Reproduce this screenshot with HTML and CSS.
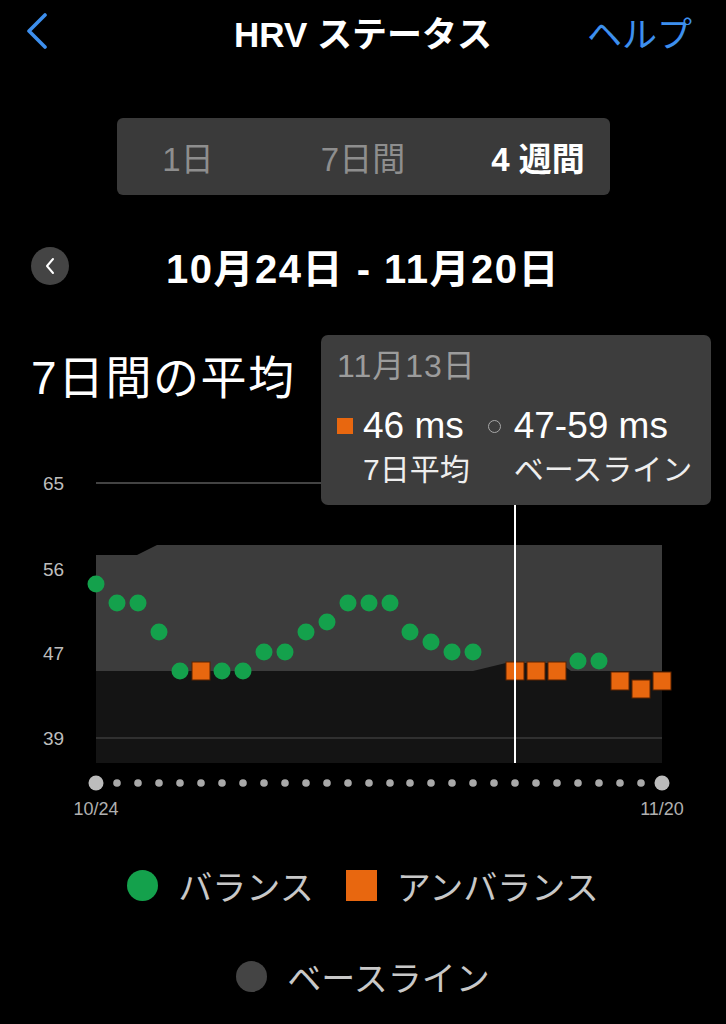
FILE: index.html
```html
<!DOCTYPE html>
<html lang="ja">

<head>
    <meta charset="UTF-8">
    <meta name="viewport" content="width=device-width, initial-scale=1.0">
    <title>HRVステータス</title>
    <link rel="stylesheet" href="styles.css">
</head>

<body>
    <div class="header">
        <div class="back">
            <svg width="22" height="36" viewBox="0 0 22 36">
                <path d="M19 2 L3 18 L19 34" fill="none" stroke="#3d8fee" stroke-width="3.6" stroke-linecap="round" stroke-linejoin="round" />
            </svg>
        </div>
        <div class="title">HRV ステータス</div>
        <div class="help">ヘルプ</div>
    </div>

    <div class="segment">
        <div class="seg-item">1日</div>
        <div class="seg-item">7日間</div>
        <div class="seg-item on">4 週間</div>
    </div>

    <div class="range">
        <div class="prev">
            <svg width="12" height="18" viewBox="0 0 12 18">
                <path d="M9 2 L3 9 L9 16" fill="none" stroke="#fff" stroke-width="2" stroke-linecap="round" stroke-linejoin="round" />
            </svg>
        </div>
        <div class="range-text">10月24日 - 11月20日</div>
    </div>

    <div class="chart">
        <h2 class="chart-title">7日間の平均</h2>

        <svg class="plot" width="726" height="416" viewBox="0 404 726 416">
            <!-- 目盛り -->
            <g class="ylabels">
                <text x="43" y="490">65</text>
                <text x="43" y="576">56</text>
                <text x="43" y="660">47</text>
                <text x="43" y="745">39</text>
            </g>
            <line x1="96" y1="483" x2="700" y2="483" stroke="#5a5a5a" stroke-width="1.5" />

            <!-- ベースライン帯 -->
            <polygon points="96,555 137,555 157,545 662,545 662,763 96,763" fill="#3c3c3c" />
            <polygon points="96,671 473,671 506,663 560,663 571,671 662,671 662,763 96,763" fill="#141414" />
            <line x1="96" y1="738" x2="662" y2="738" stroke="#3a3a3a" stroke-width="1.5" />

            <!-- データ -->
            <g class="ok">
                <circle cx="96" cy="584" r="8.5" />
                <circle cx="117" cy="603" r="8.5" />
                <circle cx="138" cy="603" r="8.5" />
                <circle cx="159" cy="632" r="8.5" />
                <circle cx="180" cy="671" r="8.5" />
                <circle cx="222" cy="671" r="8.5" />
                <circle cx="243" cy="671" r="8.5" />
                <circle cx="264" cy="652" r="8.5" />
                <circle cx="285" cy="652" r="8.5" />
                <circle cx="306" cy="632" r="8.5" />
                <circle cx="327" cy="622" r="8.5" />
                <circle cx="348" cy="603" r="8.5" />
                <circle cx="369" cy="603" r="8.5" />
                <circle cx="390" cy="603" r="8.5" />
                <circle cx="410" cy="632" r="8.5" />
                <circle cx="431" cy="642" r="8.5" />
                <circle cx="452" cy="652" r="8.5" />
                <circle cx="473" cy="652" r="8.5" />
                <circle cx="578" cy="661" r="8.5" />
                <circle cx="599" cy="661" r="8.5" />
            </g>
            <g class="ng">
                <rect x="192" y="662" width="18" height="18" />
                <rect x="506" y="662" width="18" height="18" />
                <rect x="527" y="662" width="18" height="18" />
                <rect x="548" y="662" width="18" height="18" />
                <rect x="611" y="672" width="18" height="18" />
                <rect x="632" y="680" width="18" height="18" />
                <rect x="653" y="672" width="18" height="18" />
            </g>

            <!-- 選択中の日 -->
            <line x1="515" y1="505" x2="515" y2="763" stroke="#fff" stroke-width="2" />

            <!-- 日付ドット -->
            <g class="days">
                <circle cx="96" cy="783" r="7.5" class="end" />
                <circle cx="117" cy="783" r="3.8" />
                <circle cx="138" cy="783" r="3.8" />
                <circle cx="159" cy="783" r="3.8" />
                <circle cx="180" cy="783" r="3.8" />
                <circle cx="201" cy="783" r="3.8" />
                <circle cx="222" cy="783" r="3.8" />
                <circle cx="243" cy="783" r="3.8" />
                <circle cx="264" cy="783" r="3.8" />
                <circle cx="285" cy="783" r="3.8" />
                <circle cx="306" cy="783" r="3.8" />
                <circle cx="327" cy="783" r="3.8" />
                <circle cx="348" cy="783" r="3.8" />
                <circle cx="369" cy="783" r="3.8" />
                <circle cx="390" cy="783" r="3.8" />
                <circle cx="410" cy="783" r="3.8" />
                <circle cx="431" cy="783" r="3.8" />
                <circle cx="452" cy="783" r="3.8" />
                <circle cx="473" cy="783" r="3.8" />
                <circle cx="494" cy="783" r="3.8" />
                <circle cx="515" cy="783" r="3.8" />
                <circle cx="536" cy="783" r="3.8" />
                <circle cx="557" cy="783" r="3.8" />
                <circle cx="578" cy="783" r="3.8" />
                <circle cx="599" cy="783" r="3.8" />
                <circle cx="620" cy="783" r="3.8" />
                <circle cx="641" cy="783" r="3.8" />
                <circle cx="662" cy="783" r="7.5" class="end" />
            </g>
            <g class="xlabels">
                <text x="96" y="815">10/24</text>
                <text x="662" y="815">11/20</text>
            </g>
        </svg>

        <div class="tip">
            <div class="tip-date">11月13日</div>
            <div class="tip-row">
                <div class="tip-col">
                    <span class="mark-sq"></span>
                    <span class="tip-val">46 ms</span>
                    <span class="tip-lbl">7日平均</span>
                </div>
                <div class="tip-col">
                    <span class="mark-ring"></span>
                    <span class="tip-val">47-59 ms</span>
                    <span class="tip-lbl">ベースライン</span>
                </div>
            </div>
        </div>
    </div>

    <div class="legend">
        <div class="legend-row">
            <span class="key key-ok"></span><span class="key-text">バランス</span>
            <span class="key key-ng"></span><span class="key-text">アンバランス</span>
        </div>
        <div class="legend-row second">
            <span class="key key-base"></span><span class="key-text">ベースライン</span>
        </div>
    </div>
</body>

</html>
```

FILE: styles.css
```css
* {
    margin: 0;
    padding: 0;
    box-sizing: border-box;
}

body {
    width: 726px;
    background: #000;
    color: #fff;
    font-family: "Liberation Sans", "Noto Sans CJK JP", sans-serif;
}

.header {
    height: 62px;
    display: grid;
    grid-template-columns: 1fr auto 1fr;
    align-items: center;
}

.back {
    padding-left: 26px;
    display: flex;
    align-items: center;
}

.title {
    font-size: 35px;
    font-weight: bold;
}

.help {
    justify-self: end;
    padding-right: 34px;
    font-size: 35px;
    color: #3d8fee;
}

.segment {
    width: 493px;
    height: 77px;
    margin: 56px auto 0;
    background: #3a3a3a;
    border-radius: 6px;
    display: grid;
    grid-template-columns: repeat(3, 175px);
    justify-content: center;
    align-items: center;
}

.seg-item {
    text-align: center;
    font-size: 33px;
    color: #8e8e8e;
}

.seg-item.on {
    color: #fff;
    font-weight: bold;
}

.range {
    height: 60px;
    margin-top: 41px;
    display: grid;
    grid-template-columns: 1fr auto 1fr;
    align-items: center;
}

.prev {
    width: 38px;
    height: 38px;
    margin-left: 31px;
    border-radius: 50%;
    background: #444;
    display: flex;
    align-items: center;
    justify-content: center;
}

.range-text {
    font-size: 40px;
    font-weight: bold;
    letter-spacing: 1.5px;
}

.chart {
    position: relative;
    padding-top: 56px;
}

.chart-title {
    padding-left: 31px;
    height: 52px;
    line-height: 52px;
    font-size: 46px;
    font-weight: normal;
    letter-spacing: 1.5px;
}

.plot {
    display: block;
}

.ylabels text {
    font-size: 19px;
    fill: #bdbdbd;
}

.xlabels text {
    font-size: 18px;
    fill: #b0b0b0;
    text-anchor: middle;
}

.ok circle {
    fill: #14a14c;
}

.ng rect {
    fill: #e8670f;
    stroke: #5a2200;
    stroke-width: 1;
}

.days circle {
    fill: #a9a9a9;
}

.days .end {
    fill: #bcbcbc;
}

.tip {
    position: absolute;
    top: 39px;
    left: 321px;
    width: 390px;
    height: 170px;
    padding: 12px 16px 0;
    background: #3d3d3d;
    border-radius: 7px;
}

.tip-date {
    height: 38px;
    line-height: 38px;
    font-size: 32px;
    letter-spacing: 1px;
    color: #9c9c9c;
}

.tip-row {
    margin-top: 21px;
    display: flex;
    gap: 18px;
}

.tip-col {
    display: grid;
    grid-template-columns: 16px auto;
    column-gap: 10px;
    align-items: center;
}

.mark-sq {
    width: 16px;
    height: 16px;
    background: #e8670f;
}

.mark-ring {
    width: 13px;
    height: 13px;
    border: 1.5px solid #a8a8a8;
    border-radius: 50%;
}

.tip-val {
    font-size: 37px;
    line-height: 40px;
}

.tip-lbl {
    grid-column: 2;
    margin-top: 7px;
    font-size: 30px;
    line-height: 34px;
    color: #eee;
}

.legend {
    margin-top: 45px;
}

.legend-row {
    height: 40px;
    display: flex;
    align-items: center;
    justify-content: center;
}

.legend-row.second {
    margin-top: 51px;
}

.key {
    width: 31px;
    height: 31px;
    margin-right: 20px;
}

.key-ok {
    border-radius: 50%;
    background: #14a14c;
}

.key-ng {
    margin-left: 32px;
    background: #e8670f;
}

.key-base {
    border-radius: 50%;
    background: #444;
}

.key-text {
    font-size: 34px;
    color: #c8c8c8;
}
```
